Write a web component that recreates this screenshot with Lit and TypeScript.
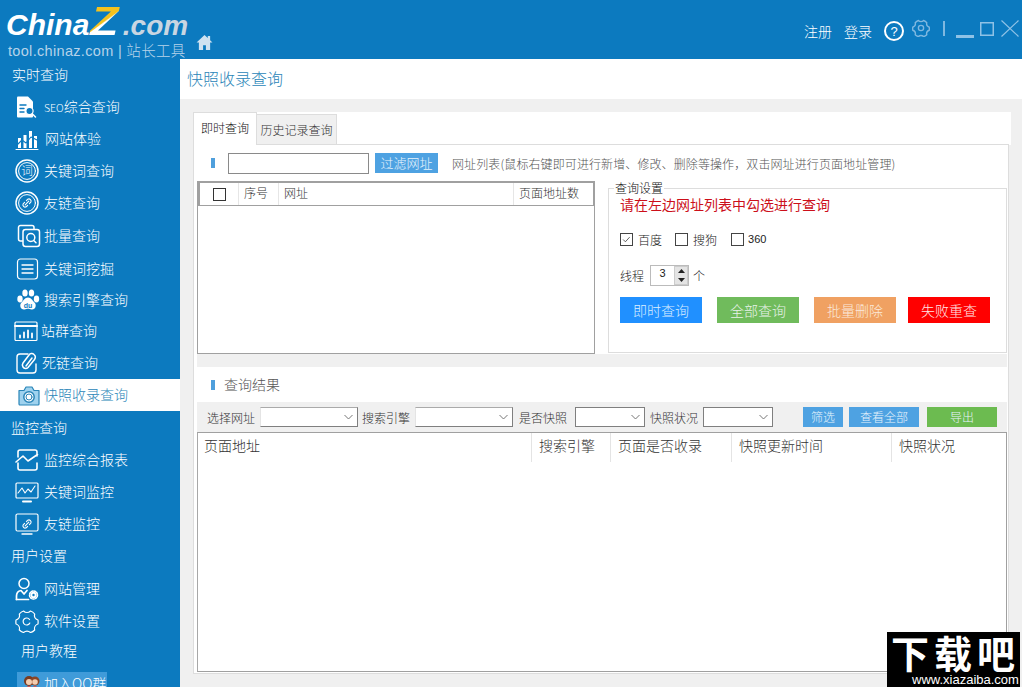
import { LitElement, html, css, svg } from "lit";
import { customElement } from "lit/decorators.js";

const S = (inner: unknown, color = "#fff") => html`<svg class="ic" viewBox="0 0 24 24" fill="none" stroke=${color} stroke-width="1.5" stroke-linecap="round" stroke-linejoin="round">${inner}</svg>`;

const ring = svg`<circle cx="12" cy="12" r="11"/><circle cx="12" cy="12" r="8.4" stroke-width="1"/>`;
const link = svg`<path d="M10.2 13.8l3.6-3.6M9.6 11.4l-1.4 1.4a2.2 2.2 0 0 0 3 3l1.4-1.4M14.4 12.6l1.4-1.4a2.2 2.2 0 0 0-3-3l-1.4 1.4" stroke-width="1.1"/>`;

const icons: Record<string, (c: string) => unknown> = {
  seo: (c) => S(svg`<path d="M4 1.5h10l5 5v15a1 1 0 0 1-1 1H4a1 1 0 0 1-1-1v-19a1 1 0 0 1 1-1z" fill=${c} stroke="none"/><path d="M6 10h6M6 13.500h4M6 17h4" stroke="#0c7abf" stroke-width="1.4"/><circle cx="15.500" cy="16" r="3.600" fill="#0c7abf" stroke=${c} stroke-width="1.200"/><path d="M18.200 18.700l3.300 3.300" stroke-width="1.500"/>`, c),
  chart: (c) => S(svg`<path d="M3 11h3v10H3zM8.500 8h3v13h-3zM14 4h3v17h-3zM19 9h3v12h-3z" fill=${c} stroke="none"/><path d="M1 19l6-6 4 3 5-6 6 3" stroke="#0c7abf" stroke-width="1.100"/><path d="M1 22.500h22" stroke-width="1"/>`, c),
  ci: (c) => S(svg`${ring}<text x="12" y="16.300" font-size="11.500" text-anchor="middle" fill=${c} stroke="none" font-family="Noto Sans CJK SC">词</text>`, c),
  lk: (c) => S(svg`${ring}${link}`, c),
  batch: (c) => S(svg`<path d="M5.500 17H3.500a2 2 0 0 1-2-2V3.500a2 2 0 0 1 2-2H15a2 2 0 0 1 2 2V5"/><rect x="6" y="5.500" width="16.500" height="17" rx="2.500"/><circle cx="13.800" cy="13.500" r="4"/><path d="M16.700 16.500l2.300 2.300"/>`, c),
  list: (c) => S(svg`<rect x="1.500" y="2" width="20" height="20" rx="3" stroke-width="1.200"/><path d="M6 8h11M6 12h11M6 16h11" stroke-width="1.300"/>`, c),
  paw: (c) => S(svg`<g fill=${c} stroke="none"><ellipse cx="4" cy="11" rx="2.700" ry="3.400"/><ellipse cx="9" cy="5" rx="2.700" ry="3.500"/><ellipse cx="15.500" cy="5" rx="2.700" ry="3.500"/><ellipse cx="20.500" cy="11" rx="2.700" ry="3.400"/><path d="M12 9.500c3 0 4.500 3 6.500 5 2.500 2.500 1 7.500-3 7-1.500-.2-2.300-.7-3.500-.7s-2 .5-3.500.7c-4 .5-5.500-4.500-3-7 2-2 3.500-5 6.500-5z"/></g><text x="12" y="20" font-size="7" text-anchor="middle" fill="#0c7abf" stroke="none" font-family="Liberation Sans" font-weight="700">du</text>`, c),
  site: (c) => S(svg`<rect x="1" y="3" width="22" height="18.500" rx="1" stroke-width="1.200"/><path d="M1 7h22" stroke-width="2"/><path d="M6 18.500v-2M10 18.500v-5M14 18.500v-7M18 18.500v-4" stroke-width="1.800"/>`, c),
  dead: (c) => S(svg`<path d="M13 3H5a3 3 0 0 0-3 3v13a3 3 0 0 0 3 3h13a3 3 0 0 0 3-3v-6" stroke-width="1.400"/><path d="M8 12l6-8a3.300 3.300 0 0 1 5-.5c1.500 1.300 1.500 3.500.5 5l-6.500 8a3.200 3.200 0 0 1-5-.5c-1-1.500-.8-2.800 0-4zM11 15l6-8" stroke-width="1.500"/>`, c),
  cam: (c) => S(svg`<path d="M2 7.500h5l2-3.500h6l2 3.500h5v13.500a1 1 0 0 1-1 1H3a1 1 0 0 1-1-1z" fill="#9fd2ee" stroke=${c} stroke-width="1.200"/><circle cx="12" cy="14" r="5.200" fill="#fff"/><circle cx="12" cy="14" r="3" stroke=${c} stroke-width="1"/>`, c),
  report: (c) => S(svg`<path d="M3 9V4a2 2 0 0 1 2-2h15a2 2 0 0 1 2 2v4M3 15v5a2 2 0 0 0 2 2h15a2 2 0 0 0 2-2v-5M1 14l7-6 5 5 9.500-6.500" stroke-width="1.600"/>`, c),
  mon: (c) => S(svg`<rect x="1" y="3" width="22" height="15" rx="1" stroke-width="1.200"/><path d="M3 13l4-5 3 5 3-4 3 3 4-6" stroke-width="1.100"/><path d="M8 21.500h8" stroke-width="2"/>`, c),
  mlk: (c) => S(svg`<rect x="1" y="2" width="22" height="17" rx="1.500" stroke-width="1.200"/>${link}<path d="M7 22h10" stroke-width="1.400"/>`, c),
  user: (c) => S(svg`<circle cx="9" cy="6.500" r="5"/><path d="M1.500 22.500v-3.500c0-3 2-5 4.500-5.500l3 3.500 3-3.500" stroke-width="1.700"/><path d="M1.500 22.500h12" stroke-width="1.700"/><circle cx="18.500" cy="18" r="3.200" fill=${c} stroke="none"/><circle cx="18.500" cy="18" r="4" stroke-dasharray="1.500 1.200" stroke-width="1.500"/><circle cx="18.500" cy="18" r="1.200" fill="#0c7abf" stroke="none"/>`, c),
  gear: (c) => S(svg`<path d="M8.500 2c2 2 5 2 7 0 1.200.4 3 1.500 4.200 3-.7 2.500.7 5 3.300 6 .2 1.500.2 2.500 0 4-2.500.8-4 3.400-3.300 6-1.200 1.200-2.800 2.200-4.200 2.500-2-1.700-5-1.700-7 0-1.500-.4-3-1.300-4.200-2.500.7-2.600-.8-5.200-3.300-6-.2-1.500-.2-2.500 0-4 2.600-1 4-3.500 3.300-6C5.500 3.500 7 2.400 8.500 2z" stroke-width="1.200"/><path d="M14.500 10.500a3.500 3.500 0 1 0 .3 3.500" stroke-width="1.200"/>`, c),
};

type Row =
  | { k: "g"; t: string; h: number; x: number }
  | { k: "i"; t: string; h: number; x: number; ic: string; il: number; on?: boolean; pre?: string };

const rows: Row[] = [
  { k: "g", t: "实时查询", h: 31, x: 12 },
  { k: "i", t: "综合查询", pre: "SEO", h: 33, x: 44, ic: "seo", il: 14 },
  { k: "i", t: "网站体验", h: 32, x: 45, ic: "chart", il: 15 },
  { k: "i", t: "关键词查询", h: 32, x: 44, ic: "ci", il: 15 },
  { k: "i", t: "友链查询", h: 32, x: 44, ic: "lk", il: 15 },
  { k: "i", t: "批量查询", h: 33, x: 44, ic: "batch", il: 17 },
  { k: "i", t: "关键词挖掘", h: 33, x: 44, ic: "list", il: 16 },
  { k: "i", t: "搜索引擎查询", h: 29, x: 44, ic: "paw", il: 16 },
  { k: "i", t: "站群查询", h: 33, x: 41, ic: "site", il: 14 },
  { k: "i", t: "死链查询", h: 32, x: 42, ic: "dead", il: 15 },
  { k: "i", t: "快照收录查询", h: 32, x: 44, ic: "cam", il: 17, on: true },
  { k: "g", t: "监控查询", h: 33, x: 11 },
  { k: "i", t: "监控综合报表", h: 32, x: 44, ic: "report", il: 15 },
  { k: "i", t: "关键词监控", h: 32, x: 44, ic: "mon", il: 15 },
  { k: "i", t: "友链监控", h: 31, x: 44, ic: "mlk", il: 15 },
  { k: "g", t: "用户设置", h: 33, x: 11 },
  { k: "i", t: "网站管理", h: 33, x: 44, ic: "user", il: 15 },
  { k: "i", t: "软件设置", h: 32, x: 44, ic: "gear", il: 15 },
  { k: "g", t: "用户教程", h: 28, x: 21 },
];

@customElement("app-root")
export class AppRoot extends LitElement {
  static styles = css`
    :host { display: block; width: 1022px; height: 687px; overflow: hidden; position: relative;
      font-family: "Noto Sans CJK SC", "Liberation Sans", sans-serif; font-weight: 300; font-size: 12px; color: #333; background: #f0f0f0; }
    * { box-sizing: border-box; }
    .top { height: 59px; background: #0c7abf; display: flex; color: #fff; }
    .logo { width: 180px; position: relative; flex: none; padding: 5px 0 0 6px; }
    .brand { font: italic 700 30px/32px "Liberation Sans", sans-serif; white-space: nowrap; display: flex; align-items: baseline; }
    .brand .z { display: inline-block; font-size: 40px; line-height: 32px; padding: 0 3px 0 2px; margin: 0 5px 0 -1px; width: 30px; transform: scaleX(1.15); transform-origin: left; background: linear-gradient(140deg, #f4c21e 50%, #fff 52%); -webkit-background-clip: text; background-clip: text; color: transparent; }
    .brand .dot { color: #c9d6e2; font-size: 28px; }
    .sub { margin: 0 0 0 2px; font-size: 14.500px; line-height: 18px; color: #b6d3ea; white-space: nowrap; font-family: "Liberation Sans", "Noto Sans CJK SC", sans-serif; letter-spacing: .32px; }
    .home { position: absolute; left: 196px; top: 35px; width: 17px; height: 15px; }
    .tr { margin-left: auto; display: flex; align-items: center; height: 59px; padding-right: 3px; font-size: 14px; }
    .tr .a { margin-right: 12px; padding-top: 2px; }
    .tr svg { display: block; flex: none; }
    .body { display: flex; height: 628px; }
    .side { width: 180px; flex: none; background: #0c7abf; color: #fff; font-size: 14px; }
    .row { display: flex; align-items: center; white-space: nowrap; }
    .row > span { padding-bottom: 2px; }
    .row .pre { font-size: 10.500px; }
    .row.on { background: #fff; color: #2a85b8; }
    .ic { width: 24px; height: 24px; flex: none; display: block; }
    .qq { margin: 7px 0 0 17px; width: 90px; height: 22px; background: #3f9bd9; display: flex; align-items: flex-start; gap: 4px; padding: 2px 0 0 6px; font-size: 14px; line-height: 18px; white-space: nowrap; }
    .qq svg { width: 17px; height: 19px; flex: none; }
    .main { flex: 1; display: flex; flex-direction: column; min-width: 0; }
    .title { height: 40px; background: #fff; color: #2a85b8; font-size: 16px; line-height: 38px; padding-left: 7px; flex: none; }
    .panel { margin: 13px 0 0 13px; width: 816px; height: 562px; display: flex; flex-direction: column; }
    .tabs { display: flex; height: 33px; flex: none; background: #fff; margin-right: -2px; }
    .tab { font-size: 12px; text-align: center; }
    .tab.act { width: 64px; height: 33px; color: #111; background: #fff; border: 1px solid #ddd; border-bottom: 0; line-height: 29px; position: relative; z-index: 1; }
    .tab.off { width: 80px; height: 31px; margin-top: 2px; background: #f0f0f0; border: 1px solid #ddd; border-left: 0; border-bottom: 0; line-height: 29px; color: #333; }
    .box { flex: 1; background: #fff; border: 1px solid #ddd; margin-top: -1px; padding: 0 1px 0 3px; display: flex; flex-direction: column; }
    .f1 { height: 36px; display: flex; align-items: center; padding-left: 14px; flex: none; }
    .mark { width: 4px; height: 10px; background: #4f9fdc; flex: none; }
    .inp { width: 141px; height: 21px; border: 1px solid #8a8a8a; margin-left: 13px; background: #fff; flex: none; }
    .fbtn { width: 63px; height: 20px; background: #4ea2e2; color: #e6f3fc; margin-left: 6px; font-size: 13px; line-height: 20px; text-align: center; flex: none; }
    .hint { margin-left: 14px; color: #555; font-size: 12px; white-space: nowrap; letter-spacing: .1px; }
    .upper { display: flex; height: 173px; flex: none; }
    .list { width: 398px; border: 1px solid #a0a0a0; flex: none; }
    .lh { height: 24px; border: 1px solid #a0a0a0; display: grid; grid-template-columns: 39px 40px 235px 1fr; box-shadow: inset 1px 0 0 #a0a0a0; }
    .lh > div { border-left: 1px solid #e6e6e6; line-height: 20px; padding-left: 5px; font-size: 12px; color: #333; }
    .lh > div:first-child { border: 0; display: flex; align-items: center; justify-content: center; padding: 0 0 0 2px; }
    .cb { width: 13px; height: 13px; border: 1px solid #333; background: #fff; flex: none; display: block; }
    .fs { margin: 7px 0 0 13px; width: 399px; height: 165px; border: 1px solid #ddd; position: relative; padding: 5px 0 0 11px; flex: none; }
    .lg { position: absolute; left: 5px; top: -8px; background: #fff; padding: 0 1px; font-size: 12px; line-height: 14px; color: #111; }
    .red { color: #cc0f1a; font-size: 14px; line-height: 20px; font-weight: 400; }
    .checks { display: flex; align-items: center; margin-top: 17px; height: 16px; font-size: 12px; color: #222; }
    .checks .cb { border-color: #444; margin-right: 5px; }
    .checks span { margin-right: 13px; }
    .checks span + .cb + span { margin-right: 14px; }
    .checks span.n { font-family: "Liberation Sans", sans-serif; font-size: 11px; margin-left: -1px; }
    .th { display: flex; align-items: center; margin-top: 18px; height: 21px; color: #222; font-size: 12px; }
    .spin { width: 39px; height: 21px; border: 1px solid #bbb; margin: 0 4px 0 6px; display: flex; font: 11px "Liberation Sans", sans-serif; }
    .spin b { flex: 1; font-weight: 400; text-align: center; line-height: 15px; }
    .spin i { width: 14px; background: #e4e4e4; border: 1px solid #ccc; display: flex; flex-direction: column; align-items: center; justify-content: space-around; font-style: normal; }
    .btns { display: flex; margin-top: 11px; }
    .btn { width: 82px; height: 26px; color: #e8f2ea; font-size: 14px; line-height: 26px; text-align: center; flex: none; }
    .gap { height: 13px; background: #f0f0f0; flex: none; }
    .rh { height: 35px; display: flex; align-items: center; padding-left: 14px; gap: 9px; font-size: 14px; color: #555; flex: none; }
    .rh span { padding-bottom: 2px; }
    .bar { height: 30px; background: #f0f0f0; display: flex; align-items: center; padding-left: 10px; font-size: 12px; color: #333; flex: none; }
    .sel { height: 20px; border: 1px solid #7f7f7f; background: #fff; display: flex; align-items: center; justify-content: flex-end; padding-right: 4px; flex: none; }
    .sel.flat { border-top-color: #aaa; border-left-color: #e4e4e4; }
    .sel svg { width: 9px; height: 6px; }
    .sb { height: 20px; color: #e6f3fc; text-align: center; line-height: 20px; font-size: 12px; flex: none; }
    .res { height: 240px; border: 1px solid #a0a0a0; border-left-color: #a8a8a8; background: #fff; flex: none; }
    .rt { display: grid; grid-template-columns: 333px 79px 121px 160px 1fr; height: 29px; font-size: 14px; color: #333; line-height: 25px; }
    .rt div { padding-left: 7px; border-left: 1px solid #e4e4e4; }
    .rt div:first-child { border: 0; padding-left: 6px; }
    .wm { position: absolute; left: 887px; top: 632px; width: 133px; height: 55px; background: #000; color: #fff; text-align: center; }
    .wm .big { font: 700 38px/40px "Noto Sans CJK SC", sans-serif; letter-spacing: 5px; white-space: nowrap; padding-left: 4px; }
    .wm .url { font: 13px/13px "Liberation Sans", sans-serif; position: absolute; left: 25px; top: 41px; white-space: nowrap; }
  `;

  private chev() {
    return html`<svg viewBox="0 0 9 6" fill="none" stroke="#777" stroke-width="1"><path d="M.5 1l4 4 4-4"/></svg>`;
  }

  private sel(w: number, flat = false) {
    return html`<div class="sel ${flat ? "flat" : ""}" style="width:${w}px">${this.chev()}</div>`;
  }

  private renderRow(r: Row) {
    if (r.k === "g") return html`<div class="row" style="height:${r.h}px;padding-left:${r.x}px"><span>${r.t}</span></div>`;
    const c = r.on ? "#2a85b8" : "#fff";
    return html`<div class="row ${r.on ? "on" : ""}" style="height:${r.h}px;padding-left:${r.il}px">
      ${icons[r.ic](c)}<span style="margin-left:${r.x - r.il - 24}px">${r.pre ? html`<span class="pre">${r.pre}</span>` : ""}${r.t}</span></div>`;
  }

  render() {
    return html`
      <div class="top">
        <div class="logo">
          <div class="brand"><span>China</span><span class="z">Z</span><span class="dot">.com</span></div>
          <div class="sub">tool.chinaz.com | 站长工具</div>
          <svg class="home" viewBox="0 0 17 16" fill="#cfe2f1"><path d="M8.500 0L0 8h2.500v8h4.500v-5h3v5h4.500V8H17l-2.500-2.400V1h-2.500v2.200z"/></svg>
        </div>
        <div class="tr">
          <span class="a">注册</span><span class="a">登录</span>
          <svg width="20" height="20" viewBox="0 0 20 20" fill="none" style="margin:3px 8px 0 0"><circle cx="10" cy="10" r="9" stroke="#fff" stroke-width="2"/><text x="10" y="14.500" text-anchor="middle" font-size="13" fill="#fff" font-family="Liberation Sans">?</text></svg>
          <svg width="18" height="18" viewBox="0 0 24 24" fill="none" stroke="#7fb8e0" stroke-width="1.800" style="margin:-3px 13px 0 0"><path d="M8.500 2c2 2 5 2 7 0 1.200.4 3 1.500 4.200 3-.7 2.500.7 5 3.300 6 .2 1.500.2 2.500 0 4-2.500.8-4 3.400-3.300 6-1.200 1.200-2.800 2.200-4.200 2.500-2-1.700-5-1.700-7 0-1.500-.4-3-1.300-4.200-2.500.7-2.600-.8-5.200-3.300-6-.2-1.500-.2-2.500 0-4 2.600-1 4-3.500 3.300-6C5.500 3.500 7 2.400 8.500 2z"/><circle cx="12" cy="12" r="3.500"/></svg>
          <svg width="2" height="15" style="margin:-3px 11px 0 0"><rect width="2" height="15" fill="#7fb8e0"/></svg>
          <svg width="18" height="3" style="margin:13px 6px 0 0"><rect width="18" height="3" fill="#8fc2e6"/></svg>
          <svg width="14" height="14" viewBox="0 0 14 14" fill="none" stroke="#8fc2e6" stroke-width="1.500" style="margin:-2px 7px 0 0"><rect x=".75" y=".75" width="12.500" height="12.500"/></svg>
          <svg width="18" height="17" viewBox="0 0 18 17" fill="none" stroke="#8fc2e6" stroke-width="1.200" style="margin-top:-3px"><path d="M.5.5l17 16M17.500.5l-17 16"/></svg>
        </div>
      </div>
      <div class="body">
        <div class="side">
          ${rows.map((r) => this.renderRow(r))}
          <div class="qq">
            <svg viewBox="0 0 17 19"><circle cx="6" cy="7" r="5" fill="#7a3b20"/><circle cx="12" cy="7" r="4.500" fill="#8a4526"/><circle cx="6" cy="8" r="3" fill="#f4cdb0"/><circle cx="12" cy="8" r="2.800" fill="#f4cdb0"/><path d="M1 19c0-5 3-7 5-7s5 2 5 7zM8 19c0-5 2-7 4-7s4 2 4 7z" fill="#d9534f"/></svg>
            <span>加入QQ群</span>
          </div>
        </div>
        <div class="main">
          <div class="title">快照收录查询</div>
          <div class="panel">
            <div class="tabs"><div class="tab act">即时查询</div><div class="tab off">历史记录查询</div></div>
            <div class="box">
              <div class="f1">
                <div class="mark"></div><div class="inp"></div><div class="fbtn">过滤网址</div>
                <div class="hint">网址列表(鼠标右键即可进行新增、修改、删除等操作，双击网址进行页面地址管理)</div>
              </div>
              <div class="upper">
                <div class="list"><div class="lh"><div><span class="cb"></span></div><div>序号</div><div>网址</div><div>页面地址数</div></div></div>
                <div class="fs">
                  <div class="lg">查询设置</div>
                  <div class="red">请在左边网址列表中勾选进行查询</div>
                  <div class="checks">
                    <svg class="cb" viewBox="0 0 13 13" fill="none" stroke="#444" stroke-width="1"><path d="M2.500 6.500l2.700 2.700 5-5.500"/></svg><span>百度</span>
                    <i class="cb"></i><span>搜狗</span>
                    <i class="cb"></i><span class="n">360</span>
                  </div>
                  <div class="th">线程
                    <div class="spin"><b>3</b><i><svg width="7" height="4"><path d="M3.500 0L7 4H0z" fill="#222"/></svg><svg width="7" height="4"><path d="M0 0h7L3.500 4z" fill="#222"/></svg></i></div>个</div>
                  <div class="btns">
                    <div class="btn" style="background:#2090ff;color:#dceeff">即时查询</div>
                    <div class="btn" style="background:#70bb5c;margin-left:15px">全部查询</div>
                    <div class="btn" style="background:#f0a162;margin-left:15px;color:#fbe9da">批量删除</div>
                    <div class="btn" style="background:#ff0000;margin-left:12px;color:#ffe6e6">失败重查</div>
                  </div>
                </div>
              </div>
              <div class="gap"></div>
              <div class="rh"><div class="mark"></div><span>查询结果</span></div>
              <div class="bar">
                <span>选择网址</span><span style="width:5px"></span>${this.sel(98, true)}
                <span style="margin-left:4px">搜索引擎</span><span style="width:5px"></span>${this.sel(98, true)}
                <span style="margin-left:6px">是否快照</span><span style="width:8px"></span>${this.sel(70)}
                <span style="margin-left:5px">快照状况</span><span style="width:5px"></span>${this.sel(70)}
                <div class="sb" style="width:40px;margin-left:30px;background:#4ea2e2">筛选</div>
                <div class="sb" style="width:70px;margin-left:6px;background:#4ea2e2">查看全部</div>
                <div class="sb" style="width:70px;margin-left:8px;background:#6cbb50">导出</div>
              </div>
              <div class="res"><div class="rt"><div>页面地址</div><div>搜索引擎</div><div>页面是否收录</div><div>快照更新时间</div><div>快照状况</div></div></div>
            </div>
          </div>
        </div>
      </div>
      <div class="wm"><div class="big">下载吧</div><div class="url">www.xiazaiba.com</div></div>
    `;
  }
}
